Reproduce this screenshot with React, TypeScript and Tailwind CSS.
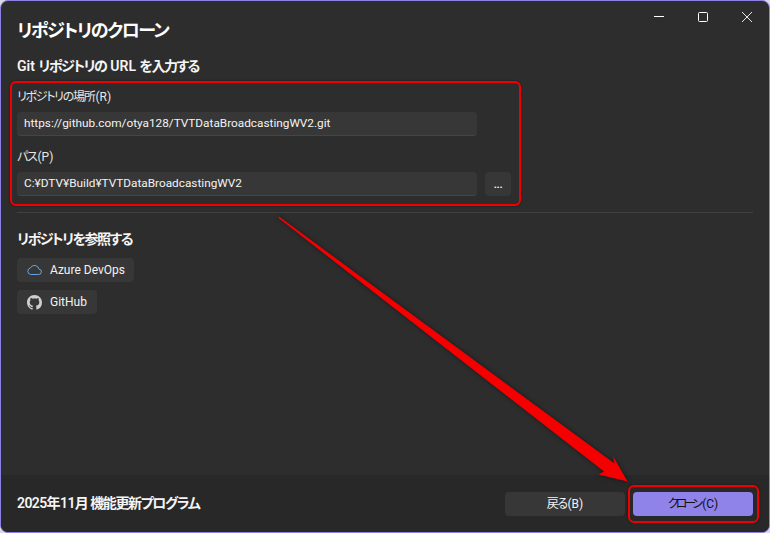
const font = { fontFamily: 'Roboto, "Noto Sans CJK JP", sans-serif', fontFeatureSettings: '"palt"' };

function Input({ value, className }: { value: string; className: string }) {
  return (
    <div className={`flex h-6 items-center rounded-[4px] border-b border-[#454545] bg-[#373737] pl-[7px] text-[11.8px] text-[#f3f3f3] ${className}`}>
      {value}
    </div>
  );
}

function LinkButton({ label, width, children }: { label: string; width: string; children: React.ReactNode }) {
  return (
    <div className={`flex h-6 items-center gap-[8px] rounded-[4px] bg-[#373737] pl-[10px] text-[12px] text-[#f3f3f3] ${width}`}>
      <span className="flex w-[15px] justify-center">{children}</span>
      <span>{label}</span>
    </div>
  );
}

export default function App() {
  return (
    <div className="relative h-[533px] w-[770px] overflow-hidden bg-[#d8d8e8]" style={font}>
      <div className="flex h-full flex-col overflow-hidden rounded-[8px] border border-[#8b80e6] bg-[#2d2d2d]">
        <div className="flex-1 px-4 pt-[16px]">
          <div className="flex items-start justify-between">
            <h1 className="text-[18px] leading-[28px] font-semibold tracking-[-1.5px] text-white">リポジトリのクローン</h1>
            <div className="mr-px -mt-[5px] flex items-center gap-[34px]">
              <svg width="10" height="10" viewBox="0 0 10 10"><path d="M0 4.5h10" stroke="#fff" strokeWidth="1" /></svg>
              <svg width="10" height="10" viewBox="0 0 10 10"><rect x="0.5" y="0.5" width="9" height="9" rx="1" fill="none" stroke="#fff" /></svg>
              <svg width="10" height="10" viewBox="0 0 10 10"><path d="M0 0l10 10M10 0L0 10" stroke="#e8e8e8" strokeWidth="1" /></svg>
            </div>
          </div>
          <h2 className="mt-[11px] text-[14px] leading-[20px] font-semibold text-[#f5f5f5]">
            Git <span className="tracking-[-1.5px]">リポジトリの</span><span className="ml-[4px]">URL</span> <span className="tracking-[-1.5px]">を入力する</span>
          </h2>
          <div className="mt-[12px] text-[12px] leading-[18px] text-[#e8e8e8]">
            <span className="tracking-[-1.3px]">リポジトリの場所</span><span className="ml-[1px]">(R)</span>
          </div>
          <Input value="https://github.com/otya128/TVTDataBroadcastingWV2.git" className="mt-[6px] w-[460px]" />
          <div className="mt-[12px] text-[12px] leading-[18px] text-[#e8e8e8]">
            <span className="tracking-[-1.3px]">パス</span><span className="ml-[1px]">(P)</span>
          </div>
          <div className="mt-[6px] flex gap-2">
            <Input value="C:¥DTV¥Build¥TVTDataBroadcastingWV2" className="w-[460px]" />
            <div className="flex h-6 w-[26px] items-center justify-center rounded-[4px] bg-[#373737] pt-px text-[11px] leading-none font-semibold tracking-[-0.3px] text-white">...</div>
          </div>
          <div className="mt-[16px] h-px bg-[#414141]" />
          <h2 className="mt-[16px] text-[14px] leading-[20px] font-semibold tracking-[-1.5px] text-[#f5f5f5]">リポジトリを参照する</h2>
          <div className="mt-[9px] flex flex-col items-start gap-2">
            <LinkButton label="Azure DevOps" width="w-[117px]">
              <svg width="15" height="12" viewBox="0 0 15 12"><path d="M3.7 10.5h7.8a2.7 2.7 0 0 0 .4-5.4A4.5 4.5 0 0 0 3.4 4 3.3 3.3 0 0 0 3.7 10.5z" fill="none" stroke="#62a5e0" strokeWidth="1" /></svg>
            </LinkButton>
            <LinkButton label="GitHub" width="w-[80px]">
              <svg width="15" height="15" viewBox="0 0 16 16" fill="#cfcfcf"><path d="M8 0C3.58 0 0 3.58 0 8c0 3.54 2.29 6.53 5.47 7.59.4.07.55-.17.55-.38 0-.19-.01-.82-.01-1.49-2.01.37-2.53-.49-2.69-.94-.09-.23-.48-.94-.82-1.13-.28-.15-.68-.52-.01-.53.63-.01 1.08.58 1.23.82.72 1.21 1.87.87 2.33.66.07-.52.28-.87.51-1.07-1.78-.2-3.64-.89-3.64-3.95 0-.87.31-1.59.82-2.15-.08-.2-.36-1.02.08-2.12 0 0 .67-.21 2.2.82.64-.18 1.32-.27 2-.27s1.36.09 2 .27c1.53-1.04 2.2-.82 2.2-.82.44 1.1.16 1.92.08 2.12.51.56.82 1.27.82 2.15 0 3.07-1.87 3.75-3.65 3.95.29.25.54.73.54 1.48 0 1.07-.01 1.93-.01 2.2 0 .21.15.46.55.38A8.01 8.01 0 0 0 16 8c0-4.42-3.58-8-8-8z" /></svg>
            </LinkButton>
          </div>
        </div>
        <div className="flex h-[57px] items-center justify-between bg-[#282828] pl-4 pr-4">
          <span className="text-[14px] font-semibold text-[#f5f5f5]">
            <span className="tracking-[-0.6px]">2025年11月</span><span className="ml-[2px] tracking-[-1.4px]">機能更新プログラム</span>
          </span>
          <div className="flex gap-2">
            <div className="flex h-6 w-[120px] items-center justify-center rounded-[4px] bg-[#373737] text-[12px] text-[#f3f3f3]">
              <span className="tracking-[-1.5px]">戻る</span><span className="ml-[1px]">(B)</span>
            </div>
            <div className="flex h-6 w-[120px] items-center justify-center rounded-[4px] bg-[#8f82e8] text-[12px] text-[#111]">
              <span className="tracking-[-3px]">クローン</span>
              <span className="ml-[2px]">(C)</span>
            </div>
          </div>
        </div>
      </div>
      <div className="absolute left-[10px] top-[81px] h-[125px] w-[511px] rounded-[6px] border-2 border-[#f00000] shadow-[0_0_2px_#00000080]" />
      <div className="absolute left-[628px] top-[485px] h-[38px] w-[131px] rounded-[6px] border-2 border-[#f00000] shadow-[0_0_2px_#00000080]" />
      <svg className="absolute left-0 top-0 drop-shadow-[0_0_2px_#00000080]" width="770" height="533" viewBox="0 0 770 533">
        <path d="M279 216.5L614.5 463.5L613 456L627.5 481.5L598.5 474.5L604 471.5L278.5 218Z" fill="#f50000" />
      </svg>
    </div>
  );
}
